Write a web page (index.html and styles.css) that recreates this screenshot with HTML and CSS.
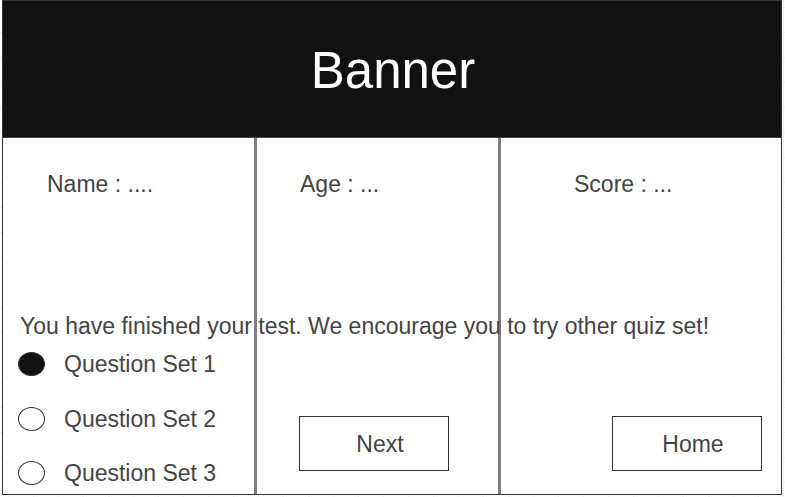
FILE: index.html
```html
<!DOCTYPE html>
<html lang="en">
<head>
	<meta charset="UTF-8">
	<title>Quiz Result</title>
	<link rel="stylesheet" href="styles.css">
</head>
<body>

	<div class="frame">
		<div class="banner">Banner</div>
		<div class="panel">
			<div class="col col-1"></div>
			<div class="col col-2"></div>
			<div class="col col-3"></div>

			<div class="info info-name">Name : ....</div>
			<div class="info info-age">Age : ...</div>
			<div class="info info-score">Score : ...</div>

			<p class="message">You have finished your test. We encourage you to try other quiz set!</p>

			<ul class="sets">
				<li class="set"><span class="radio checked"></span>Question Set 1</li>
				<li class="set"><span class="radio"></span>Question Set 2</li>
				<li class="set"><span class="radio"></span>Question Set 3</li>
			</ul>

			<a class="btn btn-next" href="javascript:void(0);">Next</a>
			<a class="btn btn-home" href="javascript:void(0);">Home</a>
		</div>
	</div>

</body>
</html>
```

FILE: styles.css
```css
*{padding:0;margin:0;box-sizing:border-box;}
a{text-decoration:none;}
ul{list-style:none;}

body{
	width:785px;height:497px;overflow:hidden;
	font-family:"Liberation Sans", Arial, sans-serif;
	color:#444;
	background-color:#fff;
	background-image:
		linear-gradient(to right, #efefef 1px, transparent 1px),
		linear-gradient(to bottom, #efefef 1px, transparent 1px);
	background-size:25px 25px;
	background-position:8px 7px;
}

.frame{
	width:780px;height:495px;margin-left:2px;
	border:1px solid #333;background:#fff;
	display:flex;flex-direction:column;
}
.banner{
	height:137px;flex:none;
	background:#111;border-bottom:1px solid #444;
	color:#fff;font-size:51px;
	display:flex;align-items:center;justify-content:center;
	padding-left:2px;padding-top:3px;
}

.panel{
	flex:1;min-height:0;overflow:hidden;
	display:grid;
	grid-template-columns:254px 244px 1fr;
	grid-template-rows:175px 38px 1fr;
	font-size:23px;line-height:26px;
}
.col{grid-row:1 / -1;}
.col-1{grid-column:1;border-right:3px solid #7f7f7f;}
.col-2{grid-column:2;border-right:3px solid #7f7f7f;}
.col-3{grid-column:3;}

.info{grid-row:1;padding-top:33px;}
.info-name{grid-column:1;padding-left:44px;}
.info-age{grid-column:2;padding-left:43px;}
.info-score{grid-column:3;padding-left:73px;}

.message{grid-column:1 / -1;grid-row:2;padding-left:17px;white-space:nowrap;}

.sets{grid-column:1;grid-row:3;padding-left:15px;}
.set{display:flex;align-items:center;height:26px;margin-bottom:28.5px;}
.set:last-child{margin-bottom:0;}
.radio{
	width:27px;height:24px;border-radius:50%;
	border:1px solid #333;margin-right:19px;flex:none;
}
.radio.checked{background:#111;}

.btn{
	grid-row:3;align-self:start;
	width:150px;height:55px;margin-top:65px;
	border:1px solid #333;color:#444;
	display:flex;align-items:center;justify-content:center;
	padding-left:12px;
}
.btn-next{grid-column:2;margin-left:42px;}
.btn-home{grid-column:3;margin-left:111px;}
```
